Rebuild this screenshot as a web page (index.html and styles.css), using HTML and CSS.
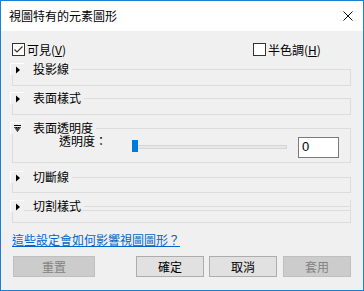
FILE: index.html
```html
<!DOCTYPE html>
<html>
<head>
<meta charset="utf-8">
<link rel="stylesheet" href="styles.css">
</head>
<body>
<div class="window">
  <div class="titlebar">
    <span class="title">視圖特有的元素圖形</span>
    <svg class="close" width="10" height="10" viewBox="0 0 10 10"><path d="M0.5 0.5L9.5 9.5M9.5 0.5L0.5 9.5" stroke="#111" stroke-width="1"/></svg>
  </div>
  <div class="content">
    <div class="top-row">
      <div class="check"><span class="box"><svg width="11" height="11" viewBox="0 0 11 11"><path d="M1.5 5.5L4 8L9.5 2.5" fill="none" stroke="#333" stroke-width="1.2"/></svg></span><span>可見(<u>V</u>)</span></div>
      <div class="check"><span class="box"></span><span>半色調(<u>H</u>)</span></div>
    </div>

    <div class="group g1">
      <div class="group-head">
        <span class="toggle"><svg width="12" height="10" viewBox="0 0 12 10"><path d="M4 1.5L8 5L4 8.5Z" fill="#000"/></svg></span>
        <span class="label">投影線</span>
        <span class="line"></span>
      </div>
      <div class="group-body h16"></div>
    </div>

    <div class="group g2">
      <div class="group-head">
        <span class="toggle"><svg width="12" height="10" viewBox="0 0 12 10"><path d="M4 1.5L8 5L4 8.5Z" fill="#000"/></svg></span>
        <span class="label">表面樣式</span>
        <span class="line"></span>
      </div>
      <div class="group-body h16"></div>
    </div>

    <div class="group g3">
      <div class="group-head">
        <span class="toggle"><svg width="12" height="10" viewBox="0 0 12 10"><path d="M2 1.5H9" stroke="#000" stroke-width="1"/><path d="M2 3H9L5.5 8Z" fill="#000"/><path d="M3 4H4M5 4H6M7 4H8M4 5H5M6 5H7M5 6H6" stroke="#f0f0f0" stroke-width="0.6"/></svg></span>
        <span class="label">表面透明度</span>
        <span class="line"></span>
      </div>
      <div class="group-body h34 opacity-row">
        <span class="op-label">透明度：</span>
        <div class="slider">
          <div class="track"></div>
          <div class="thumb"></div>
        </div>
        <div class="input">0</div>
      </div>
    </div>

    <div class="group g4">
      <div class="group-head">
        <span class="toggle"><svg width="12" height="10" viewBox="0 0 12 10"><path d="M4 1.5L8 5L4 8.5Z" fill="#000"/></svg></span>
        <span class="label">切斷線</span>
        <span class="line"></span>
      </div>
      <div class="group-body h15"></div>
    </div>

    <div class="group g5">
      <div class="group-head edge">
        <span class="toggle"><svg width="12" height="10" viewBox="0 0 12 10"><path d="M4 1.5L8 5L4 8.5Z" fill="#000"/></svg></span>
        <span class="label">切割樣式</span>
        <span class="line"></span>
      </div>
      <div class="group-body boxed"></div>
    </div>

    <a class="help">這些設定會如何影響視圖圖形？</a>

    <div class="buttons">
      <div class="btn disabled reset">重置</div>
      <div class="btn ok">確定</div>
      <div class="btn cancel">取消</div>
      <div class="btn disabled apply">套用</div>
    </div>
  </div>
</div>
</body>
</html>
```

FILE: styles.css
```css
body {
  margin: 0;
  font-family: "Noto Sans CJK TC", "Noto Sans", sans-serif;
  font-size: 12px;
  color: #000;
}

.window {
  width: 364px;
  height: 291px;
  box-sizing: border-box;
  border: 1px solid #1a7fd6;
  background: #f0f0f0;
  overflow: hidden;
}

.titlebar {
  height: 30px;
  background: #fff;
  display: flex;
  align-items: center;
  justify-content: space-between;
  padding: 0 10px 0 8px;
}

.title {
  font-size: 12px;
  line-height: 14px;
}

.close {
  display: block;
}

.content {
  padding: 12px 0 0 11px;
}

.top-row {
  display: grid;
  grid-template-columns: 241px auto;
  height: 13px;
}

.check {
  display: flex;
  align-items: center;
  gap: 2px;
  line-height: 13px;
  height: 13px;
}

.box {
  width: 13px;
  height: 13px;
  box-sizing: border-box;
  border: 1px solid #333;
  background: #fff;
  display: block;
}

.box svg {
  display: block;
}

.group {
  width: 339px;
}

.g1 { margin-top: 7px; }
.g2 { margin-top: 6px; }
.g3 { margin-top: 7px; }
.g4 { margin-top: 8px; }
.g5 { margin-top: 7px; }

.group-head {
  position: relative;
  display: flex;
  height: 12px;
  margin-left: -2px;
}

.group-head.edge {
  border-right: 1px solid #dcdcdc;
}

.toggle {
  width: 14px;
  height: 12px;
  box-sizing: border-box;
  border-top: 1px solid #fff;
  border-left: 1px solid #fff;
  background: #f0f0f0;
  display: flex;
  align-items: center;
  justify-content: center;
}

.toggle svg {
  display: block;
}

.label {
  margin-left: 9px;
  line-height: 12px;
  white-space: nowrap;
}

.line {
  flex: 1;
  height: 1px;
  margin-top: 6px;
  margin-left: 3px;
  background: #dcdcdc;
}

.group-body {
  box-sizing: border-box;
  border: 1px solid #dcdcdc;
  border-top: none;
  margin-top: -5px;
}

.h16 { height: 16px; }
.h15 { height: 15px; }
.h34 { height: 34px; }

.group-body.boxed {
  border-top: 1px solid #dcdcdc;
  margin-top: -2px;
  height: 13px;
}

.opacity-row {
  display: flex;
  align-items: flex-start;
}

.op-label {
  margin-left: 46px;
  margin-top: 5px;
  line-height: 14px;
  white-space: nowrap;
}

.slider {
  position: relative;
  width: 155px;
  height: 12px;
  margin-top: 11px;
  margin-left: 25px;
}

.track {
  margin-top: 5px;
  margin-left: 2px;
  height: 4px;
  box-sizing: border-box;
  border: 1px solid #d6d6d6;
  background: #e7e7e7;
}

.thumb {
  position: absolute;
  left: 0;
  top: 0;
  width: 6px;
  height: 12px;
  background: #0078d7;
}

.input {
  margin-left: 11px;
  margin-top: 8px;
  width: 41px;
  height: 21px;
  box-sizing: border-box;
  border: 1px solid #7a7a7a;
  background: #fff;
  padding-left: 3px;
  line-height: 18px;
  font-family: "Liberation Sans", sans-serif;
  font-size: 13px;
}

.help {
  display: block;
  margin-top: 10px;
  width: max-content;
  line-height: 14px;
  color: #0066cc;
  text-decoration: underline;
}

.buttons {
  display: flex;
  margin-top: 9px;
}

.btn {
  height: 21px;
  box-sizing: border-box;
  border: 1px solid #adadad;
  background: #e1e1e1;
  display: flex;
  align-items: center;
  justify-content: center;
  line-height: 14px;
  width: 68px;
}

.btn.disabled {
  background: #cccccc;
  border-color: #bfbfbf;
  color: #838383;
}

.reset {
  margin-left: 1px;
  width: 82px;
}

.ok { margin-left: 41px; }
.cancel { margin-left: 5px; }
.apply { margin-left: 6px; }
```
